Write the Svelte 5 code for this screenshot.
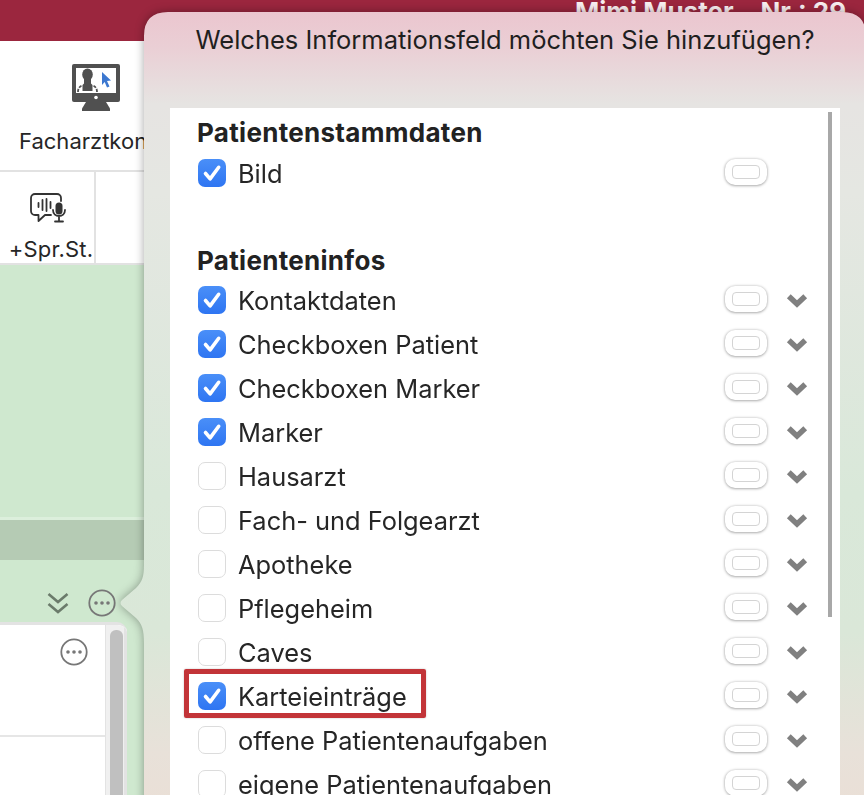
<script>
	const stammdaten = [{ label: 'Bild', checked: true }];
	const infos = [
		{ label: 'Kontaktdaten', checked: true },
		{ label: 'Checkboxen Patient', checked: true },
		{ label: 'Checkboxen Marker', checked: true },
		{ label: 'Marker', checked: true },
		{ label: 'Hausarzt', checked: false },
		{ label: 'Fach- und Folgearzt', checked: false },
		{ label: 'Apotheke', checked: false },
		{ label: 'Pflegeheim', checked: false },
		{ label: 'Caves', checked: false },
		{ label: 'Karteieinträge', checked: true, marked: true },
		{ label: 'offene Patientenaufgaben', checked: false },
		{ label: 'eigene Patientenaufgaben', checked: false }
	];
</script>

{#snippet row(item, more)}
	<li class="row">
		{#if item.marked}<span class="mark"></span>{/if}
		<span class="box" class:on={item.checked}>
			{#if item.checked}
				<svg viewBox="0 0 28 28" width="28" height="28"><path d="M7.500 14.500l4.600 5.400 8.600-11.600" fill="none" stroke="#fff" stroke-width="3.600" stroke-linecap="round" stroke-linejoin="round" /></svg>
			{/if}
		</span>
		<span class="label">{item.label}</span>
		<span class="toggle"><span></span></span>
		{#if more}
			<svg class="chev" viewBox="0 0 22 16" width="22" height="16"><path d="M2.800 3.200L11 11l8.200-7.800" fill="none" stroke="#808080" stroke-width="5.500" /></svg>
		{/if}
	</li>
{/snippet}

{#snippet dots(cls)}
	<svg class={cls} viewBox="0 0 28 28" width="28" height="28">
		<circle cx="14" cy="14" r="12.700" fill="none" stroke="currentColor" stroke-width="1.800" />
		<circle cx="8" cy="14" r="1.800" fill="currentColor" />
		<circle cx="14" cy="14" r="1.800" fill="currentColor" />
		<circle cx="20" cy="14" r="1.800" fill="currentColor" />
	</svg>
{/snippet}

<div class="app">
	<header class="titlebar"><span>Mimi Muster</span><span>Nr.: 29</span></header>

	<section class="toolbar">
		<button class="tool">
			<svg viewBox="0 0 48 48" width="48" height="48">
				<rect x="0" y="0" width="48" height="38" rx="2" fill="#505050" />
				<rect x="4" y="4" width="40" height="25" fill="#fff" />
				<circle cx="24" cy="33.500" r="1.800" fill="#fff" />
				<path d="M14 38h20l4 6.500v2.500H10v-2.500z" fill="#505050" />
				<ellipse cx="15.500" cy="10.500" rx="5.300" ry="6" fill="#505050" />
				<path d="M12 14h7v5.500l1.500 1.500v6h-10v-6l1.500-1.500z" fill="#505050" />
				<path d="M6 28c0-3.500 1.500-5.500 4-6.500M25 28c0-3.500-1.500-5.500-4-6.500" fill="none" stroke="#505050" stroke-width="1.800" stroke-dasharray="3 1.500" />
				<path d="M30 8l9 8.500-4 .5 2.500 5.500-2.500 1-2.300-5.500-2.700 3z" fill="#3c78d0" />
			</svg>
			<span>Facharztkonsil</span>
		</button>
	</section>

	<section class="subbar">
		<button class="subtool">
			<svg viewBox="0 0 36 30" width="36" height="30">
				<path d="M24 1H5a4 4 0 0 0-4 4v13a4 4 0 0 0 4 4h3.500v6l6.500-6h6" fill="none" stroke="#333" stroke-width="1.800" stroke-linecap="round" stroke-linejoin="round" />
				<path d="M24 1h3a4 4 0 0 1 4 4v3" fill="none" stroke="#333" stroke-width="1.800" stroke-linecap="round" />
				<path d="M8.500 10v4M12.500 7v10M16.500 6v12M20.500 9v6" fill="none" stroke="#333" stroke-width="1.800" stroke-linecap="round" />
				<rect x="25.500" y="9.500" width="7" height="12" rx="3.500" fill="#333" />
				<path d="M23 17c0 8 12 8 12 0M29 23.500v4.500M25 28.500h8" fill="none" stroke="#333" stroke-width="1.800" stroke-linecap="round" />
			</svg>
			<span>+Spr.St.</span>
		</button>
	</section>

	<section class="green"></section>
	<section class="band"></section>

	<section class="lower">
		<div class="actions">
			<svg class="double" viewBox="0 0 22 22" width="22" height="22"><path d="M1.500 2l9.500 8 9.500-8M1.500 12l9.500 8 9.500-8" fill="none" stroke="currentColor" stroke-width="2.600" /></svg>
			{@render dots('more')}
		</div>
		<div class="panel">
			<div class="panel-main">
				<div class="panel-head">{@render dots('more')}</div>
				<div class="panel-rest"></div>
			</div>
			<div class="panel-scroll"><span></span></div>
		</div>
	</section>

	<div class="popover-shadow">
		<div class="popover">
			<h2>Welches Informationsfeld möchten Sie hinzufügen?</h2>
			<div class="list">
				<span class="scroll"></span>
				<h3>Patientenstammdaten</h3>
				<ul class="first">
					{#each stammdaten as item}{@render row(item, false)}{/each}
				</ul>
				<h3>Patienteninfos</h3>
				<ul class="second">
					{#each infos as item}{@render row(item, true)}{/each}
				</ul>
			</div>
		</div>
	</div>
</div>

<style>
	:global(body) {
		margin: 0;
	}

	.app {
		position: relative;
		width: 864px;
		height: 795px;
		overflow: hidden;
		display: flex;
		flex-direction: column;
		background: #cfe8cf;
		font-family: Inter, 'Liberation Sans', sans-serif;
		color: #262626;
	}

	button {
		border: 0;
		background: none;
		padding: 0;
		font: inherit;
		color: inherit;
		display: flex;
		flex-direction: column;
		align-items: center;
	}

	.titlebar {
		height: 41px;
		flex: none;
		display: flex;
		gap: 27px;
		background: #9b263e;
		color: #f8eef0;
		font-size: 26px;
		font-weight: 700;
		line-height: 24px;
		padding-left: 575px;
		box-sizing: border-box;
		white-space: nowrap;
	}

	.toolbar {
		height: 129px;
		flex: none;
		background: #fff;
		border-bottom: 2px solid #e2e2e2;
		padding-left: 19px;
	}

	.tool {
		padding-top: 23px;
		width: 154px;
		align-items: flex-start;
	}

	.tool svg {
		margin-left: 53px;
	}

	.tool span {
		margin-top: 17px;
		font-size: 22px;
		line-height: 24px;
		white-space: nowrap;
	}

	.subbar {
		height: 91px;
		flex: none;
		background: #fff;
		border-bottom: 2px solid #e2e2e2;
		display: flex;
	}

	.subtool {
		width: 96px;
		height: 91px;
		border-right: 2px solid #e2e2e2;
		padding-top: 21px;
		box-sizing: border-box;
	}

	.subtool svg {
		margin-left: 1px;
	}

	.subtool span {
		margin: 14px 0 0 8px;
		font-size: 22px;
		line-height: 24px;
		letter-spacing: 0.2px;
		white-space: nowrap;
	}

	.green {
		height: 252px;
		flex: none;
	}

	.band {
		height: 40px;
		flex: none;
		border-top: 3px solid #dcefdc;
		background: #b5cbb4;
		box-sizing: content-box;
	}

	.lower {
		flex: 1;
		display: flex;
		flex-direction: column;
		min-height: 0;
	}

	.actions {
		width: 116px;
		height: 64px;
		flex: none;
		display: flex;
		align-items: flex-end;
		justify-content: flex-end;
		gap: 19px;
		padding-bottom: 7px;
		box-sizing: border-box;
		color: #6f7d6f;
	}

	.double {
		color: #6b7b6b;
		margin-bottom: 3px;
	}

	.more {
		color: #777;
		display: block;
	}

	.panel {
		width: 127px;
		flex: 1;
		display: flex;
		background: #fff;
		border-top: 3px solid #e3e3e3;
		border-top-right-radius: 10px;
		overflow: hidden;
		margin-top: -2px;
	}

	.panel-main {
		width: 105px;
		flex: none;
		display: flex;
		flex-direction: column;
	}

	.panel-head {
		height: 112px;
		display: flex;
		justify-content: flex-end;
		padding: 13px 17px 0 0;
		box-sizing: border-box;
		border-bottom: 2px solid #e6e6e6;
	}

	.panel-scroll {
		flex: 1;
		background: #f0f0f0;
		border-left: 1px solid #e3e3e3;
		border-right: 3px solid #e3e3e3;
		padding: 5px 1px 0 4px;
		display: flex;
	}

	.panel-scroll span {
		flex: 1;
		background: #c0c0c0;
		border-radius: 6px 6px 0 0;
	}

	.popover-shadow {
		position: absolute;
		left: 120px;
		top: 12px;
		width: 746px;
		height: 800px;
		filter: drop-shadow(0 0 5px rgba(0, 0, 0, 0.35));
	}

	.popover {
		width: 100%;
		height: 100%;
		padding: 0 26px 0 50px;
		box-sizing: border-box;
		clip-path: path('M48 0H722Q746 0 746 24V800H24V632C24 617 22 612 16 606L2 594Q-1 591 2 588L16 576C22 570 24 565 24 553V24Q24 0 48 0Z');
		background: linear-gradient(180deg, #ebc6cf 0, #eacfd5 36px, #e6e4e2 92px, #e5e7e2 180px, #d9e8d9 480px, #dae7d8 620px, #e8e1d9 740px, #eadfd6 800px);
		display: flex;
		flex-direction: column;
	}

	h2 {
		margin: 0;
		height: 96px;
		padding-top: 12px;
		box-sizing: border-box;
		font-size: 25.500px;
		line-height: 32px;
		font-weight: 400;
		text-align: center;
		color: #1f1f1f;
		white-space: nowrap;
	}

	.list {
		position: relative;
		background: #fff;
		flex: 1;
		padding: 11px 0 0 27px;
		width: 670px;
		box-sizing: border-box;
	}

	.scroll {
		position: absolute;
		right: 8px;
		top: 4px;
		width: 4px;
		height: 505px;
		background: #a8a8a8;
	}

	h3 {
		margin: 0;
		font-size: 26px;
		line-height: 28px;
		font-weight: 700;
		letter-spacing: 0.3px;
		color: #222;
	}

	ul {
		list-style: none;
		margin: 0;
		padding: 0;
	}

	.first {
		height: 96px;
		padding-top: 4px;
	}

	.second {
		padding-top: 3px;
	}

	.row {
		position: relative;
		height: 44px;
		display: flex;
		align-items: center;
		font-size: 25.400px;
	}

	.box {
		width: 28px;
		height: 28px;
		box-sizing: border-box;
		border: 1.500px solid #dcdcdc;
		border-radius: 7px;
		margin-left: 1px;
		flex: none;
		background: #fff;
	}

	.box.on {
		border: 0;
		background: linear-gradient(180deg, #4a8ff8, #2e75f2);
	}

	.box svg {
		display: block;
	}

	.label {
		margin-left: 12px;
		flex: none;
		width: 487px;
		white-space: nowrap;
		position: relative;
	}

	.toggle {
		width: 42px;
		height: 26px;
		box-sizing: border-box;
		border-radius: 10px;
		background: #fff;
		box-shadow: 0 0.500px 3px rgba(0, 0, 0, 0.45);
		display: flex;
		align-items: center;
		justify-content: center;
		flex: none;
		position: relative;
		top: -1px;
	}

	.toggle span {
		width: 28px;
		height: 14px;
		box-sizing: border-box;
		border: 1px solid #d4d4d4;
		border-radius: 4px;
	}

	.chev {
		margin: 1px 0 0 19px;
		flex: none;
	}

	.mark {
		position: absolute;
		left: -13px;
		top: -5px;
		width: 242px;
		height: 49px;
		box-sizing: border-box;
		border: 5px solid #c23438;
		border-radius: 2px;
		box-shadow: 0 0 2px rgba(0, 0, 0, 0.25);
	}
</style>
